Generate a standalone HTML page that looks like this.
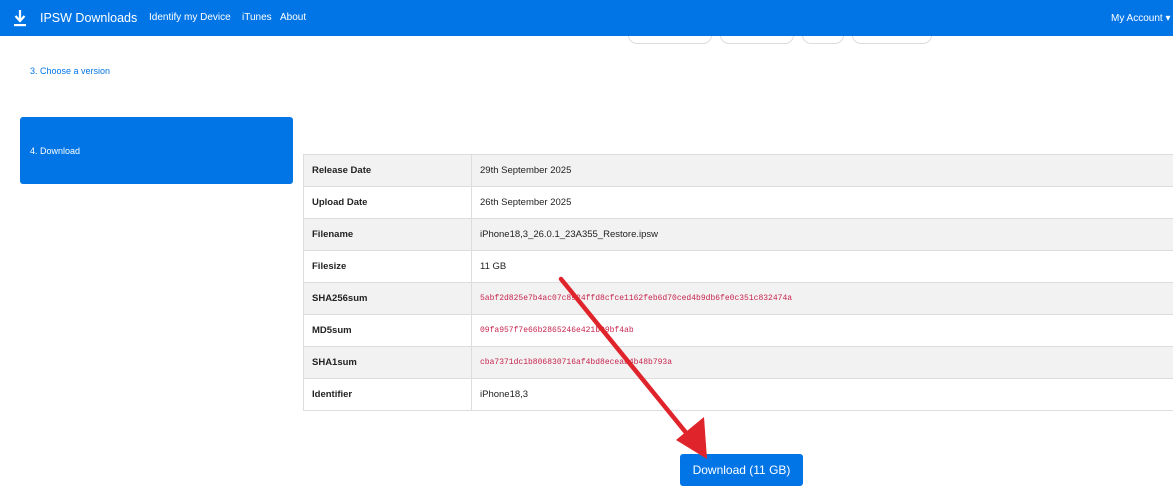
<!DOCTYPE html>
<html><head><style>
body{margin:0;width:1173px;height:496px;overflow:hidden;background:#fff;font-family:"Liberation Sans",sans-serif;position:relative}
.nav{position:absolute;left:0;top:0;width:1173px;height:36px;background:#0275e6;color:#fff}
.nav span{position:absolute;top:12px;font-size:10px;white-space:nowrap}
.pill{position:absolute;top:26px;height:16px;border:1px solid #ddd;border-radius:9px;background:#fff}
table{position:absolute;left:303px;top:154px;width:875px;border-collapse:collapse;font-size:9.5px;color:#222}
td{height:31px;border:1px solid #ddd;padding:0 8px}
tr:nth-child(odd) td{background:#f2f2f2}
td.l{width:151px;font-weight:bold}
.h{font-family:"Liberation Mono",monospace;color:#c7254e;font-size:8px}
</style></head><body>
<div class="pill" style="left:628px;width:82px"></div>
<div class="pill" style="left:720px;width:72px"></div>
<div class="pill" style="left:802px;width:40px"></div>
<div class="pill" style="left:852px;width:78px"></div>
<div class="nav">
<svg style="position:absolute;left:13px;top:10px" width="14" height="17" viewBox="0 0 14 17"><path d="M7 0v10M2.5 6l4.5 5 4.5-5" stroke="#fff" stroke-width="2.2" fill="none"/><rect x="1" y="14" width="12" height="2.2" fill="#fff"/></svg>
<span style="left:40px;top:11px;font-size:12.5px">IPSW Downloads</span>
<span style="left:149px">Identify my Device</span>
<span style="left:242px">iTunes</span>
<span style="left:280px">About</span>
<span style="left:1111px;top:13px;font-size:10px">My Account ▾</span>
</div>
<div style="position:absolute;left:30px;top:66px;font-size:9px;color:#0275e6">3. Choose a version</div>
<div style="position:absolute;left:20px;top:117px;width:273px;height:67px;background:#0275e6;border-radius:3px;color:#fff;font-size:9px"><span style="position:absolute;left:10px;top:29px">4. Download</span></div>
<table>
<tr><td class="l">Release Date</td><td>29th September 2025</td></tr>
<tr><td class="l">Upload Date</td><td>26th September 2025</td></tr>
<tr><td class="l">Filename</td><td>iPhone18,3_26.0.1_23A355_Restore.ipsw</td></tr>
<tr><td class="l">Filesize</td><td>11 GB</td></tr>
<tr><td class="l">SHA256sum</td><td class="h">5abf2d825e7b4ac07c8924ffd8cfce1162feb6d70ced4b9db6fe0c351c832474a</td></tr>
<tr><td class="l">MD5sum</td><td class="h">09fa957f7e66b2865246e421b09bf4ab</td></tr>
<tr><td class="l">SHA1sum</td><td class="h">cba7371dc1b806830716af4bd8eceab4b48b793a</td></tr>
<tr><td class="l">Identifier</td><td>iPhone18,3</td></tr>
</table>
<div style="position:absolute;left:680px;top:454px;width:123px;height:32px;background:#0275e6;border-radius:3px;color:#fff;font-size:12px;line-height:32px;text-align:center">Download (11 GB)</div>
<svg style="position:absolute;left:0;top:0" width="1173" height="496"><line x1="561" y1="279" x2="692" y2="440" stroke="#e0242b" stroke-width="4.5" stroke-linecap="round"/><polygon points="707,459 676,440 704,417" fill="#e0242b"/></svg>
</body></html>
